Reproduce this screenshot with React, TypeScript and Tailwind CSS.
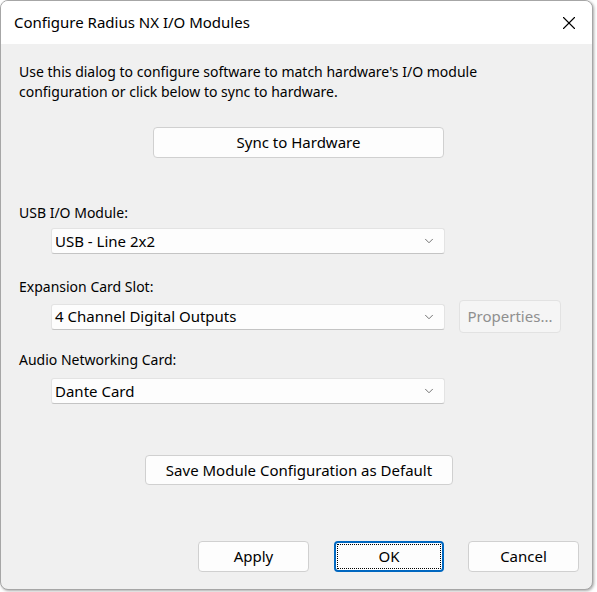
import { X, ChevronDown } from "lucide-react";

const font = { fontFamily: '"Noto Sans", "Liberation Sans", sans-serif' };

function Button({ label, className = "", disabled = false, focused = false }: { label: string; className?: string; disabled?: boolean; focused?: boolean }) {
  if (focused) {
    return (
      <div className={`rounded-[4px] border-2 border-[#0067c0] bg-[#fdfdfd] p-[1px] ${className}`}>
        <div className="flex h-full items-center justify-center border border-dotted border-black text-[15px] text-black">
          {label}
        </div>
      </div>
    );
  }
  return (
    <div
      className={`flex items-center justify-center rounded-[4px] border text-[15px] ${
        disabled ? "border-[#e2e2e2] bg-[#f5f5f5] text-[#8f8f8f]" : "border-[#d0d0d0] bg-[#fdfdfd] text-black"
      } ${className}`}
    >
      {label}
    </div>
  );
}

function Combo({ value }: { value: string }) {
  return (
    <div className="ml-[32px] flex h-[26px] w-[394px] items-center justify-between rounded-[3px] border border-[#e3e3e3] border-b-[#c4c4c4] bg-[#fdfdfd] pl-[3px] pr-[8px] text-[15px] text-black">
      <span>{value}</span>
      <ChevronDown className="h-[14px] w-[14px] text-[#606060]" strokeWidth={1.5} />
    </div>
  );
}

export default function App() {
  return (
    <div className="h-[592px] w-[597px] bg-white" style={font}>
      <div className="flex h-[590px] w-[593px] flex-col overflow-hidden rounded-[8px] border border-[#a6a6a6] bg-[#f0f0f0] shadow-[1px_1px_3px_rgba(0,0,0,0.35)]">
        {/* title bar */}
        <div className="flex h-[43px] shrink-0 items-center justify-between bg-white pl-[13px] pr-[12px]">
          <span className="text-[15px] text-black">Configure Radius NX I/O Modules</span>
          <X className="h-[22px] w-[22px] text-black" strokeWidth={1.2} />
        </div>

        <div className="flex flex-col pl-[18px]">
          <p className="mt-[18px] text-[14px] leading-[20px] text-black">
            Use this dialog to configure software to match hardware's I/O module
            <br />
            configuration or click below to sync to hardware.
          </p>

          <Button label="Sync to Hardware" className="ml-[134px] mt-[25px] h-[31px] w-[291px]" />

          <div className="mt-[45px] text-[14px] leading-[20px] text-black">USB I/O Module:</div>
          <div className="mt-[5px]">
            <Combo value="USB - Line 2x2" />
          </div>

          <div className="mt-[23px] text-[14px] leading-[20px] text-black">Expansion Card Slot:</div>
          <div className="mt-[3px] flex items-center">
            <Combo value="4 Channel Digital Outputs" />
            <Button label="Properties..." disabled className="ml-[14px] h-[33px] w-[102px]" />
          </div>

          <div className="mt-[17px] text-[14px] leading-[20px] text-black">Audio Networking Card:</div>
          <div className="mt-[8px]">
            <Combo value="Dante Card" />
          </div>

          <Button label="Save Module Configuration as Default" className="ml-[126px] mt-[51px] h-[30px] w-[308px]" />

          <div className="mt-[56px] flex">
            <Button label="Apply" className="ml-[179px] h-[31px] w-[111px]" />
            <Button label="OK" focused className="ml-[25px] h-[31px] w-[110px]" />
            <Button label="Cancel" className="ml-[24px] h-[31px] w-[111px]" />
          </div>
        </div>
      </div>
    </div>
  );
}
